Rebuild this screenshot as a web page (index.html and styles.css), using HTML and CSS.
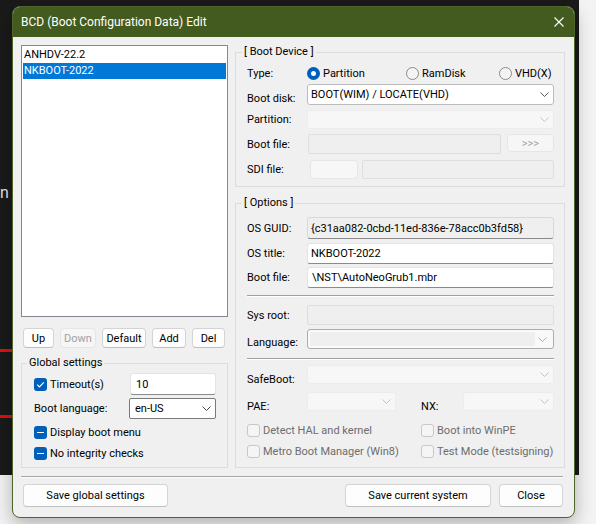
FILE: index.html
```html
<!DOCTYPE html>
<html lang="en">
<head>
    <meta charset="UTF-8">
    <meta name="viewport" content="width=device-width, initial-scale=1.0">
    <title>BCD (Boot Configuration Data) Edit</title>
    <link rel="stylesheet" href="styles.css">
</head>
<body>

<div class="screen">
    <div class="desktop">
        <span class="desk-text">n</span>
        <i class="red-line line-1"></i>
        <i class="red-line line-2"></i>
    </div>

    <div class="window">
        <div class="titlebar">
            <span class="title">BCD (Boot Configuration Data) Edit</span>
            <svg class="close-icon" width="10" height="10" viewBox="0 0 10 10">
                <path d="M0.5 0.5 L9.5 9.5 M9.5 0.5 L0.5 9.5" stroke="#fff" stroke-width="1.1" fill="none"/>
            </svg>
        </div>

        <div class="client">
            <div class="main">

                <div class="left">
                    <div class="listbox">
                        <div class="item">ANHDV-22.2</div>
                        <div class="item selected">NKBOOT-2022</div>
                    </div>

                    <div class="list-buttons">
                        <button class="btn w-up">Up</button>
                        <button class="btn w-down" disabled>Down</button>
                        <button class="btn w-default">Default</button>
                        <button class="btn w-add">Add</button>
                        <button class="btn w-del">Del</button>
                    </div>

                    <fieldset class="group global">
                        <legend>Global settings</legend>
                        <div class="g-row timeout-row">
                            <label class="check">
                                <span class="cbox on">
                                    <svg width="13" height="13" viewBox="0 0 13 13"><path d="M3.2 6.7 L5.4 8.9 L9.8 4.3" stroke="#fff" stroke-width="1.2" fill="none"/></svg>
                                </span>
                                Timeout(s)
                            </label>
                            <div class="edit timeout">10</div>
                        </div>
                        <div class="g-row lang-row">
                            <span>Boot language:</span>
                            <div class="combo dark">
                                en-US
                                <svg class="chev" width="9" height="5" viewBox="0 0 9 5"><path d="M0.5 0.5 L4.5 4.5 L8.5 0.5" stroke="#444" fill="none"/></svg>
                            </div>
                        </div>
                        <div class="g-row flag-row">
                            <label class="check">
                                <span class="cbox on"><i class="dash"></i></span>
                                Display boot menu
                            </label>
                        </div>
                        <div class="g-row flag-row">
                            <label class="check">
                                <span class="cbox on"><i class="dash"></i></span>
                                No integrity checks
                            </label>
                        </div>
                    </fieldset>
                </div>

                <div class="right">
                    <fieldset class="group device">
                        <legend>[ Boot Device ]</legend>
                        <div class="f-row type-row">
                            <span class="lbl">Type:</span>
                            <label class="radio-opt opt-part"><span class="radio on"></span>Partition</label>
                            <label class="radio-opt opt-ram"><span class="radio"></span>RamDisk</label>
                            <label class="radio-opt"><span class="radio"></span>VHD(X)</label>
                        </div>
                        <div class="f-row disk-row">
                            <span class="lbl low">Boot disk:</span>
                            <div class="combo">
                                BOOT(WIM) / LOCATE(VHD)
                                <svg class="chev" width="9" height="5" viewBox="0 0 9 5"><path d="M0.5 0.5 L4.5 4.5 L8.5 0.5" stroke="#555" fill="none"/></svg>
                            </div>
                        </div>
                        <div class="f-row part-row">
                            <span class="lbl">Partition:</span>
                            <div class="combo off">
                                <svg class="chev" width="9" height="5" viewBox="0 0 9 5"><path d="M0.5 0.5 L4.5 4.5 L8.5 0.5" stroke="#c4c4c4" fill="none"/></svg>
                            </div>
                        </div>
                        <div class="f-row file-row">
                            <span class="lbl">Boot file:</span>
                            <div class="edit off"></div>
                            <button class="btn browse" disabled>&gt;&gt;&gt;</button>
                        </div>
                        <div class="f-row sdi-row">
                            <span class="lbl">SDI file:</span>
                            <div class="sdi-box"></div>
                            <div class="edit off"></div>
                        </div>
                    </fieldset>

                    <fieldset class="group options">
                        <legend>[ Options ]</legend>
                        <div class="f-row guid-row">
                            <span class="lbl">OS GUID:</span>
                            <div class="edit readonly">{c31aa082-0cbd-11ed-836e-78acc0b3fd58}</div>
                        </div>
                        <div class="f-row title-row">
                            <span class="lbl">OS title:</span>
                            <div class="edit">NKBOOT-2022</div>
                        </div>
                        <div class="f-row bfile-row">
                            <span class="lbl">Boot file:</span>
                            <div class="edit">\NST\AutoNeoGrub1.mbr</div>
                        </div>

                        <div class="sep"></div>

                        <div class="f-row root-row">
                            <span class="lbl">Sys root:</span>
                            <div class="edit off"></div>
                        </div>
                        <div class="f-row language-row">
                            <span class="lbl low">Language:</span>
                            <div class="combo framed">
                                <span class="field"></span>
                                <svg class="chev" width="9" height="5" viewBox="0 0 9 5"><path d="M0.5 0.5 L4.5 4.5 L8.5 0.5" stroke="#b0b0b0" fill="none"/></svg>
                            </div>
                        </div>

                        <div class="sep sep-2"></div>

                        <div class="f-row safe-row">
                            <span class="lbl lower">SafeBoot:</span>
                            <div class="combo off">
                                <svg class="chev" width="9" height="5" viewBox="0 0 9 5"><path d="M0.5 0.5 L4.5 4.5 L8.5 0.5" stroke="#c4c4c4" fill="none"/></svg>
                            </div>
                        </div>
                        <div class="f-row pae-row">
                            <span class="lbl lower">PAE:</span>
                            <div class="combo off pae">
                                <svg class="chev" width="9" height="5" viewBox="0 0 9 5"><path d="M0.5 0.5 L4.5 4.5 L8.5 0.5" stroke="#c4c4c4" fill="none"/></svg>
                            </div>
                            <span class="lbl lower nx-lbl">NX:</span>
                            <div class="combo off">
                                <svg class="chev" width="9" height="5" viewBox="0 0 9 5"><path d="M0.5 0.5 L4.5 4.5 L8.5 0.5" stroke="#c4c4c4" fill="none"/></svg>
                            </div>
                        </div>
                        <div class="f-row opt-check first-check">
                            <label class="check muted wide"><span class="cbox off"></span>Detect HAL and kernel</label>
                            <label class="check muted"><span class="cbox off"></span>Boot into WinPE</label>
                        </div>
                        <div class="f-row opt-check">
                            <label class="check muted wide"><span class="cbox off"></span>Metro Boot Manager (Win8)</label>
                            <label class="check muted"><span class="cbox off"></span>Test Mode (testsigning)</label>
                        </div>
                    </fieldset>
                </div>
            </div>

            <div class="footer">
                <div class="footer-sep"></div>
                <div class="footer-buttons">
                    <button class="btn big save-global">Save global settings</button>
                    <button class="btn big save-current">Save current system</button>
                    <button class="btn big close">Close</button>
                </div>
            </div>
        </div>
    </div>
</div>

</body>
</html>
```

FILE: styles.css
```css
body {
    margin: 0;
    background-color: #f3f3f3;
    font-family: Roboto, "Liberation Sans", sans-serif;
    font-size: 11px;
    color: #000;
}
.screen {
    position: relative;
    width: 596px;
    height: 524px;
    overflow: hidden;
}

/* desktop behind the dialog */
.desktop {
    position: absolute;
    left: 0;
    top: 0;
    width: 579px;
    height: 475px;
    background-color: #1a1a1a;
}
.desk-text {
    position: absolute;
    left: 0;
    top: 183px;
    color: #e4e4e4;
    font-size: 16px;
}
.red-line {
    position: absolute;
    left: 0;
    width: 13px;
    height: 3px;
    background-color: #e01010;
}
.line-1 { top: 349px; }
.line-2 { top: 415px; }

/* window */
.window {
    position: absolute;
    left: 12px;
    top: 6px;
    width: 563px;
    height: 512px;
    box-sizing: border-box;
    border: 1px solid #4f652a;
    border-radius: 8px;
    background-color: #f0f0f0;
    overflow: hidden;
    display: flex;
    flex-direction: column;
    box-shadow: 0 6px 18px rgba(0, 0, 0, 0.28);
}
.titlebar {
    height: 30px;
    flex: none;
    display: flex;
    align-items: center;
    justify-content: space-between;
    padding: 0 10px 0 8px;
    background-color: #445b1f;
    color: #fff;
    font-size: 12px;
}
.close-icon {
    margin-top: -1px;
}
.client {
    flex: 1;
    display: flex;
    flex-direction: column;
    padding: 7px 9px 10px 8px;
    min-height: 0;
}
.main {
    flex: 1;
    display: flex;
    gap: 7px;
    min-height: 0;
}
.left {
    width: 207px;
    display: flex;
    flex-direction: column;
}
.right {
    width: 330px;
    display: flex;
    flex-direction: column;
}

/* list */
.listbox {
    flex: 1;
    margin-top: 1px;
    border: 1px solid #828790;
    background-color: #fff;
    padding: 1px;
}
.item {
    height: 16px;
    line-height: 16px;
    padding-left: 1px;
}
.item.selected {
    background-color: #0078d7;
    color: #fff;
}
.list-buttons {
    display: flex;
    justify-content: space-between;
    margin-top: 11px;
    padding: 0 3px 0 2px;
}

/* buttons */
.btn {
    box-sizing: border-box;
    height: 20px;
    padding: 0;
    font: inherit;
    color: #000;
    background-color: #fdfdfd;
    border: 1px solid #d4d4d4;
    border-bottom-color: #bfbfbf;
    border-radius: 4px;
}
.btn:disabled {
    background-color: #f6f6f6;
    border-color: #e6e6e6;
    color: #a0a0a0;
}
.w-up { width: 31px; }
.w-down { width: 36px; }
.w-default { width: 44px; }
.w-add { width: 34px; }
.w-del { width: 33px; }

/* group boxes */
.group {
    margin: 0;
    min-width: 0;
    border: 1px solid #dcdcdc;
}
.group legend {
    padding: 0 2px;
    line-height: 14px;
}
.global {
    margin-top: 8px;
    padding: 3px 11px 6px 12px;
}
.global legend {
    margin-left: -7px;
}
.device {
    margin-top: 1px;
    padding: 5px 10px 7px 11px;
}
.device legend,
.options legend {
    margin-left: -5px;
}
.options {
    flex: 1;
    margin-top: 9px;
    padding: 7px 10px 6px 11px;
}

/* rows */
.g-row, .f-row {
    display: flex;
    align-items: center;
}
.timeout-row { height: 22px; }
.lang-row { height: 21px; margin-top: 3px; }
.flag-row { height: 16px; margin-top: 5px; }

.lbl {
    width: 60px;
    flex: none;
}
.lbl.low { padding-top: 7px; }
.lbl.lower { padding-top: 9px; }

.type-row { height: 18px; }
.disk-row { height: 21px; margin-top: 2px; }
.part-row { height: 19px; margin-top: 5px; }
.file-row { height: 20px; margin-top: 5px; }
.sdi-row { height: 19px; margin-top: 6px; }

.guid-row { height: 22px; }
.title-row { height: 21px; margin-top: 4px; }
.bfile-row { height: 21px; margin-top: 3px; }
.root-row { height: 20px; margin-top: 8px; }
.language-row { height: 20px; margin-top: 4px; }
.safe-row { height: 19px; margin-top: 5px; }
.pae-row { height: 19px; margin-top: 8px; }
.first-check { height: 15px; margin-top: 12px; }
.opt-check { height: 15px; }
.opt-check + .opt-check { margin-top: 6px; }

.sep {
    margin-top: 7px;
    border-top: 1px solid #a0a0a0;
    border-bottom: 1px solid #fff;
}
.sep-2 { margin-top: 9px; }

/* edits */
.edit {
    flex: 1;
    align-self: stretch;
    box-sizing: border-box;
    display: flex;
    align-items: center;
    padding-left: 3px;
    background-color: #fff;
    border: 1px solid #e3e3e3;
    border-bottom-color: #8a8a8a;
    border-radius: 3px;
    white-space: nowrap;
}
.edit.readonly {
    background-color: #efefef;
    border-color: #d9d9d9;
    border-bottom-color: #8a8a8a;
}
.edit.off {
    background-color: #efefef;
    border-color: #dedede;
    border-radius: 2px;
}
.file-row .edit.off { margin-left: 1px; }
.bfile-row .edit { padding-left: 4px; }
.edit.timeout {
    flex: none;
    width: 86px;
    margin-left: auto;
    padding-left: 5px;
}
.browse {
    width: 47px;
    height: 18px;
    margin-left: 6px;
    align-self: flex-start;
}
.sdi-box {
    width: 48px;
    align-self: stretch;
    box-sizing: border-box;
    margin-left: 3px;
    margin-right: 4px;
    background-color: #f7f7f7;
    border: 1px solid #e6e6e6;
    border-radius: 4px;
}

/* combo boxes */
.combo {
    flex: 1;
    align-self: stretch;
    box-sizing: border-box;
    display: flex;
    align-items: center;
    padding-left: 3px;
    background-color: #fff;
    border: 1px solid #bcbcbc;
    border-radius: 3px;
    white-space: nowrap;
}
.combo .chev {
    margin-left: auto;
    margin-right: 4px;
    flex: none;
}
.combo.off {
    background-color: #f7f7f7;
    border-color: #ececec;
}
.combo.dark {
    flex: none;
    width: 87px;
    margin-left: auto;
    padding-left: 5px;
    border-color: #7a7a7a;
    border-radius: 2px;
}
.combo.framed {
    padding: 2px;
    background-color: #f9f9f9;
    border-color: #acacac;
}
.combo.framed .field {
    align-self: stretch;
    width: 225px;
    background-color: #efefef;
}
.combo.pae {
    flex: none;
    width: 89px;
}
.nx-lbl {
    width: 42px;
    margin-left: 25px;
}

/* radio buttons */
.radio-opt {
    display: flex;
    align-items: center;
    gap: 3px;
}
.opt-part { width: 99px; }
.opt-ram { width: 93px; }
.radio {
    width: 13px;
    height: 13px;
    box-sizing: border-box;
    border-radius: 50%;
    border: 1px solid #8a8a8a;
    background-color: #f4f4f4;
}
.radio.on {
    border: 4px solid #005fb8;
    background-color: #fff;
}

/* check boxes */
.check {
    display: flex;
    align-items: center;
    gap: 3px;
}
.check.wide { width: 174px; }
.check.muted { color: #6d6d6d; }
.cbox {
    width: 13px;
    height: 13px;
    box-sizing: border-box;
    border-radius: 3px;
    display: flex;
    align-items: center;
    justify-content: center;
}
.cbox.on {
    background-color: #005fb8;
}
.cbox.off {
    background-color: #f5f5f5;
    border: 1px solid #c8c8c8;
}
.cbox .dash {
    width: 7px;
    height: 1px;
    background-color: #fff;
}

/* footer */
.footer-sep {
    margin: 8px 2px 0 0;
    border-top: 1px solid #a5a5a5;
    border-bottom: 1px solid #fbfbfb;
}
.footer-buttons {
    display: flex;
    gap: 8px;
    margin-top: 6px;
    padding: 0 2px;
}
.btn.big { height: 23px; }
.save-global { width: 145px; margin-right: auto; }
.save-current { width: 146px; }
.close { width: 64px; }
```
